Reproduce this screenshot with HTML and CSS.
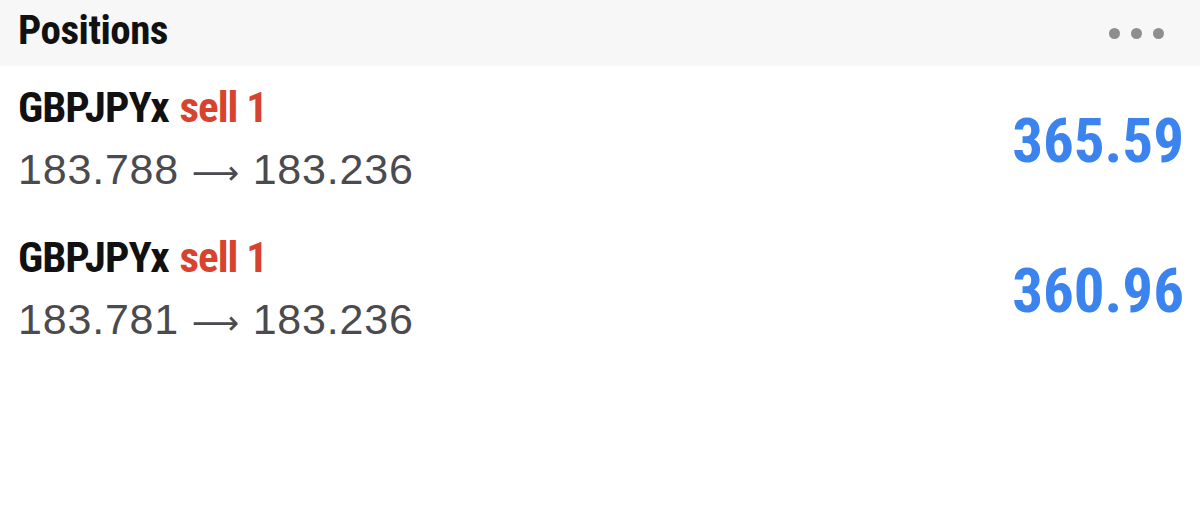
FILE: index.html
```html
<!DOCTYPE html>
<html lang="en">
<head>
    <meta charset="UTF-8">
    <meta name="viewport" content="width=device-width, initial-scale=1.0">
    <title>Positions</title>
    <link rel="stylesheet" href="styles.css">
</head>
<body>
    <div class="panel">
        <div class="panel-header">
            <h1>Positions</h1>
            <div class="more">
                <span class="dot"></span>
                <span class="dot"></span>
                <span class="dot"></span>
            </div>
        </div>

        <div class="position">
            <div class="info">
                <div class="symbol">GBPJPYx <span class="side">sell 1</span></div>
                <div class="prices">183.788 <span class="arrow">&#x27F6;</span> 183.236</div>
            </div>
            <div class="profit">365.59</div>
        </div>

        <div class="position">
            <div class="info">
                <div class="symbol">GBPJPYx <span class="side">sell 1</span></div>
                <div class="prices">183.781 <span class="arrow">&#x27F6;</span> 183.236</div>
            </div>
            <div class="profit">360.96</div>
        </div>
    </div>
</body>
</html>
```
FILE: styles.css
```css
body {
    margin: 0;
    background: #ffffff;
    font-family: 'Liberation Sans', Arial, sans-serif;
}

.panel {
    width: 1200px;
}

/* Header bar */
.panel-header {
    height: 66px;
    box-sizing: border-box;
    background-color: #f7f7f7;
    display: flex;
    align-items: center;
    justify-content: space-between;
    padding: 0 36px 6px 18px;
}

h1 {
    margin: 0;
    font-family: 'Roboto Condensed', 'Roboto', sans-serif;
    font-size: 41px;
    letter-spacing: -0.5px;
    font-weight: bold;
    color: #111;
}

.more {
    display: flex;
    gap: 11px;
    padding-top: 6px;
}

.dot {
    width: 11px;
    height: 11px;
    border-radius: 50%;
    background-color: #8e8e8e;
}

/* Position rows */
.position {
    display: flex;
    align-items: center;
    justify-content: space-between;
    padding: 0 16px 0 18px;
    height: 150px;
}

.symbol {
    font-family: 'Roboto Condensed', 'Roboto', sans-serif;
    font-size: 43px;
    letter-spacing: -1px;
    font-weight: bold;
    color: #111;
    line-height: 60px;
}

.side {
    color: #d8432f;
    margin-left: 2px;
}

.prices {
    font-size: 43px;
    letter-spacing: 0.8px;
    color: #4a4a4f;
    line-height: 64px;
}

.arrow {
    font-family: 'DejaVu Sans', sans-serif;
    font-size: 33px;
}

.profit {
    font-family: 'Roboto Condensed', 'Roboto', sans-serif;
    font-size: 61px;
    font-weight: bold;
    color: #3b83ef;
}
```
